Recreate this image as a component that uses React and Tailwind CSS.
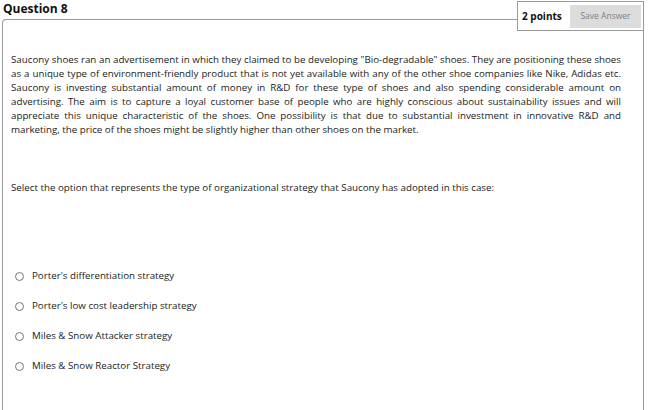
import React from "react";

const paragraph = [
  'Saucony shoes ran an advertisement in which they claimed to be developing "Bio-degradable" shoes. They are positioning these shoes',
  "as a unique type of environment-friendly product that is not yet available with any of the other shoe companies like Nike, Adidas etc.",
  "Saucony is investing substantial amount of money in R&D for these type of shoes and also spending considerable amount on",
  "advertising. The aim is to capture a loyal customer base of people who are highly conscious about sustainability issues and will",
  "appreciate this unique characteristic of the shoes. One possibility is that due to substantial investment in innovative R&D and",
];

const options = [
  "Porter's differentiation strategy",
  "Porter's low cost leadership strategy",
  "Miles & Snow Attacker strategy",
  "Miles & Snow Reactor Strategy",
];

export default function App() {
  return (
    <div className="relative h-[410px] w-[649px] overflow-hidden bg-white font-['Open_Sans',sans-serif] text-[#222]">
      {/* header */}
      <div className="h-[19px] pl-[3px] pt-[1px] text-[12px] font-bold leading-[16px] text-[#111]">
        Question 8
      </div>

      {/* points + save */}
      <div className="absolute right-[5px] top-[1px] flex h-[30px] w-[127px] items-center justify-between border border-[#999] bg-white pl-[4px] pr-[2px]">
        <span className="whitespace-nowrap text-[10px] font-bold text-[#111]">2 points</span>
        <button className="h-[23px] w-[71px] shrink-0 whitespace-nowrap bg-[#dcdcdc] text-[8.5px] text-[#808080]">Save Answer</button>
      </div>

      {/* question body */}
      <div className="ml-[2px] h-[400px] w-[642px] rounded-tl-[4px] border border-b-0 border-[#999] pl-[8px] pt-[33px]">
        <div className="w-[610px] text-[9.75px] leading-[14px]">
          {paragraph.map((line, i) => (
            <div key={i} className="text-justify [text-align-last:justify]">
              {line}
            </div>
          ))}
          <div>marketing, the price of the shoes might be slightly higher than other shoes on the market.</div>
        </div>

        <p className="mt-[44px] text-[9.75px] leading-[14px]">
          Select the option that represents the type of organizational strategy that Saucony has adopted in this case:
        </p>

        <div className="mt-[74px] flex flex-col gap-[16px] pl-[4px]">
          {options.map((o) => (
            <label key={o} className="flex h-[14px] items-center gap-[8px] text-[9.75px] leading-[14px]">
              <span className="h-[9px] w-[9px] rounded-full border border-[#777] bg-white" />
              {o}
            </label>
          ))}
        </div>
      </div>
    </div>
  );
}
